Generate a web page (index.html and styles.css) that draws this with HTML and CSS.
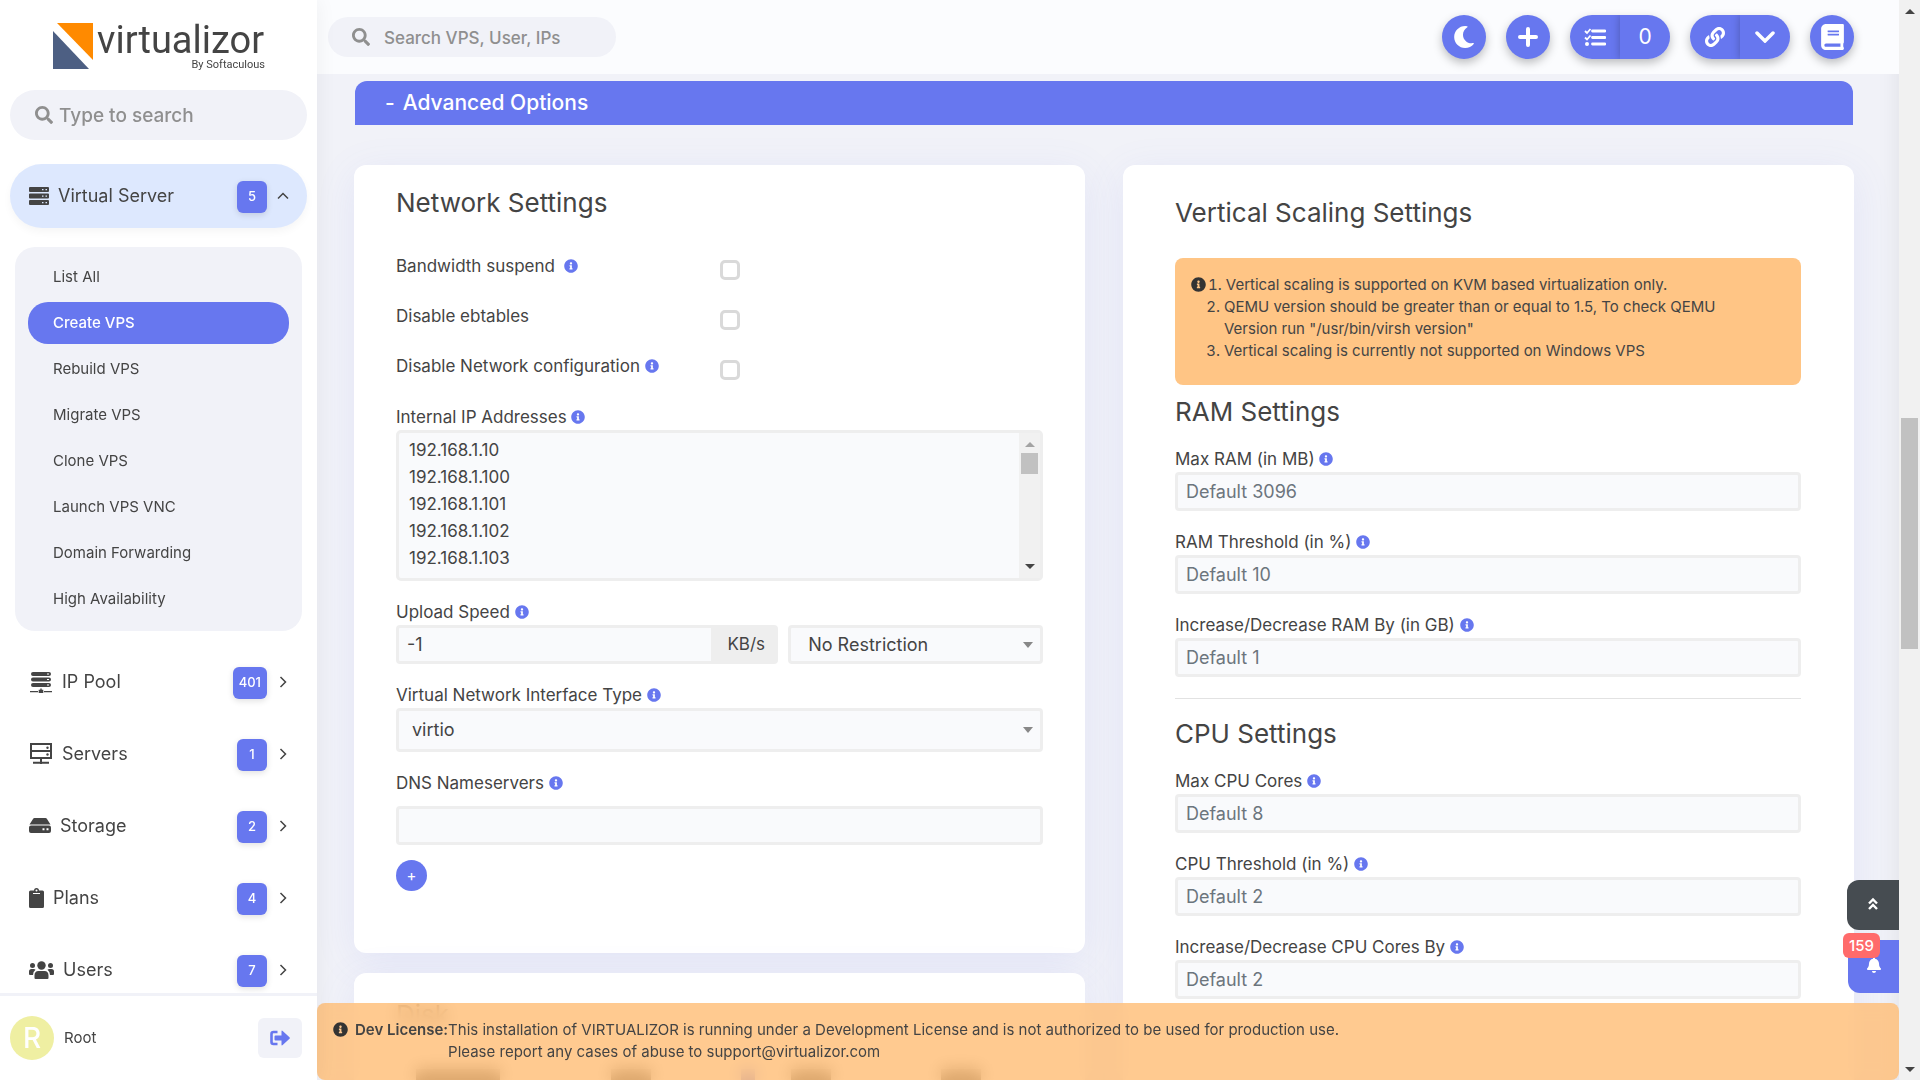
FILE: index.html
```
<!DOCTYPE html>
<html lang="en">
<head>
    <meta charset="UTF-8">
    <meta name="viewport" content="width=device-width, initial-scale=1.0">
    <title>Virtualizor - Create VPS</title>
    <link rel="stylesheet" href="styles.css">
</head>
<body>
    <svg class="sprite" aria-hidden="true">
        <symbol id="i-search" viewBox="0 0 512 512"><path d="M505 442.7L405.3 343c-4.5-4.5-10.6-7-17-7H372c27.6-35.3 44-79.7 44-128C416 93.1 322.9 0 208 0S0 93.1 0 208s93.1 208 208 208c48.3 0 92.7-16.4 128-44v16.3c0 6.4 2.5 12.5 7 17l99.7 99.7c9.4 9.4 24.6 9.4 33.9 0l28.3-28.3c9.4-9.4 9.4-24.6.1-34zM208 336c-70.7 0-128-57.2-128-128 0-70.7 57.2-128 128-128 70.7 0 128 57.2 128 128 0 70.7-57.2 128-128 128z"/></symbol>
        <symbol id="i-info" viewBox="0 0 512 512"><path d="M256 8C119.043 8 8 119.083 8 256c0 136.997 111.043 248 248 248s248-111.003 248-248C504 119.083 392.957 8 256 8zm0 110c23.196 0 42 18.804 42 42s-18.804 42-42 42-42-18.804-42-42 18.804-42 42-42zm56 254c0 6.627-5.373 12-12 12h-88c-6.627 0-12-5.373-12-12v-24c0-6.627 5.373-12 12-12h12v-64h-12c-6.627 0-12-5.373-12-12v-24c0-6.627 5.373-12 12-12h64c6.627 0 12 5.373 12 12v100h12c6.627 0 12 5.373 12 12v24z"/></symbol>
        <symbol id="i-moon" viewBox="0 0 512 512"><path d="M283.211 512c78.962 0 151.079-35.925 198.857-94.792 7.068-8.708-.639-21.43-11.562-19.35-124.203 23.654-238.262-71.576-238.262-196.954 0-72.222 38.662-138.635 101.498-174.394 9.686-5.512 7.25-20.197-3.756-22.23A258.156 258.156 0 0 0 283.211 0c-141.309 0-256 114.511-256 256 0 141.309 114.511 256 256 256z"/></symbol>
        <symbol id="i-link" viewBox="0 0 512 512"><path d="M326.612 185.391c59.747 59.809 58.927 155.698.36 214.59-.11.12-.24.25-.36.37l-67.2 67.2c-59.27 59.27-155.699 59.262-214.96 0-59.27-59.26-59.27-155.7 0-214.96l37.106-37.106c9.84-9.84 26.786-3.3 27.294 10.606.648 17.722 3.826 35.527 9.69 52.721 1.986 5.822.567 12.262-3.783 16.612l-13.087 13.087c-28.026 28.026-28.905 73.66-1.155 101.96 28.024 28.579 74.086 28.749 102.325.51l67.2-67.19c28.191-28.191 28.073-73.757 0-101.83-3.701-3.694-7.429-6.564-10.341-8.569a16.037 16.037 0 0 1-6.947-12.606c-.396-10.567 3.348-21.456 11.698-29.806l21.054-21.055c5.521-5.521 14.182-6.199 20.584-1.731a152.482 152.482 0 0 1 20.522 17.197zM467.547 44.449c-59.261-59.262-155.69-59.27-214.96 0l-67.2 67.2c-.12.12-.25.25-.36.37-58.566 58.892-59.387 154.781.36 214.59a152.454 152.454 0 0 0 20.521 17.196c6.402 4.468 15.064 3.789 20.584-1.731l21.054-21.055c8.35-8.35 12.094-19.239 11.698-29.806a16.037 16.037 0 0 0-6.947-12.606c-2.912-2.005-6.64-4.875-10.341-8.569-28.073-28.073-28.191-73.639 0-101.83l67.2-67.19c28.239-28.239 74.3-28.069 102.325.51 27.75 28.3 26.872 73.934-1.155 101.96l-13.087 13.087c-4.35 4.35-5.769 10.79-3.783 16.612 5.864 17.194 9.042 34.999 9.69 52.721.509 13.906 17.454 20.446 27.294 10.606l37.106-37.106c59.271-59.259 59.271-155.699.001-214.959z"/></symbol>
        <symbol id="i-book" viewBox="0 0 448 512"><path d="M448 360V24c0-13.3-10.7-24-24-24H96C43 0 0 43 0 96v320c0 53 43 96 96 96h328c13.3 0 24-10.7 24-24v-16c0-7.5-3.5-14.3-8.9-18.7-4.2-15.4-4.2-59.3 0-74.7 5.4-4.3 8.9-11.1 8.9-18.6zM128 134c0-3.3 2.7-6 6-6h212c3.3 0 6 2.7 6 6v20c0 3.3-2.7 6-6 6H134c-3.3 0-6-2.7-6-6v-20zm0 64c0-3.3 2.7-6 6-6h212c3.3 0 6 2.7 6 6v20c0 3.3-2.7 6-6 6H134c-3.3 0-6-2.7-6-6v-20zm253.4 250H96c-17.7 0-32-14.3-32-32 0-17.6 14.4-32 32-32h285.4c-1.9 17.1-1.9 46.9 0 64z"/></symbol>
        <symbol id="i-bell" viewBox="0 0 448 512"><path d="M224 512c35.32 0 63.97-28.65 63.97-64H160.03c0 35.35 28.65 64 63.97 64zm215.39-149.71c-19.32-20.76-55.47-51.99-55.47-154.29 0-77.7-54.48-139.9-127.94-155.16V32c0-17.67-14.32-32-31.98-32s-31.98 14.33-31.98 32v20.84C118.56 68.1 64.08 130.3 64.08 208c0 102.3-36.15 133.53-55.47 154.29-6 6.45-8.66 14.16-8.61 21.71.11 16.4 12.98 32 32.1 32h383.8c19.12 0 32-15.6 32.1-32 .05-7.55-2.61-15.27-8.61-21.71z"/></symbol>
        <symbol id="i-chevron" viewBox="0 0 16 16"><path d="M5.500 3l5 5-5 5" fill="none" stroke="currentColor" stroke-width="1.500"/></symbol>
    </svg>

    <div class="page">
        <aside class="sidebar">
            <a class="logo" href="#">
                <svg width="220" height="62" viewBox="0 -8 220 62">
                    <path d="M6 1h36v37z" fill="#ff8a00"/>
                    <path d="M2 9v38h36z" fill="#4d5f83"/>
                    <text class="logo-name" x="46" y="31">virtualizor</text>
                    <text class="logo-by" x="214" y="46" text-anchor="end">By Softaculous</text>
                </svg>
            </a>
            <label class="search side-search">
                <svg class="icon"><use href="#i-search"/></svg>
                <input type="text" placeholder="Type to search" aria-label="Type to search">
            </label>

            <nav class="menu">
                <a class="menu-item open" href="#">
                    <svg class="menu-icon" width="20" height="18" viewBox="0 0 20 18"><path fill-rule="evenodd" d="M1 0h18q1 0 1 1v3q0 1-1 1H1Q0 5 0 4V1Q0 0 1 0zM1 6.500h18q1 0 1 1v3q0 1-1 1H1q-1 0-1-1v-3q0-1 1-1zM1 13h18q1 0 1 1v3q0 1-1 1H1q-1 0-1-1v-3q0-1 1-1zM13 2v1.300h1.500V2zM16.500 2v1.300H18V2zM13 8.500v1.300h1.500V8.500zM16.500 8.500v1.300H18V8.500zM13 15v1.300h1.500V15zM16.500 15v1.300H18V15z"/></svg>
                    <span>Virtual Server</span>
                    <b class="badge">5</b>
                    <svg class="chevron up"><use href="#i-chevron"/></svg>
                </a>
                <div class="submenu">
                    <a href="#">List All</a>
                    <a href="#" class="active">Create VPS</a>
                    <a href="#">Rebuild VPS</a>
                    <a href="#">Migrate VPS</a>
                    <a href="#">Clone VPS</a>
                    <a href="#">Launch VPS VNC</a>
                    <a href="#">Domain Forwarding</a>
                    <a href="#">High Availability</a>
                </div>
                <a class="menu-item" href="#">
                    <svg class="menu-icon" width="24" height="22" viewBox="0 0 24 22"><path fill-rule="evenodd" d="M4 1h16q2 0 2 2t-2 2H4Q2 5 2 3t2-2zM4 6.500h16q2 0 2 2t-2 2H4q-2 0-2-2t2-2zM4 12h16q2 0 2 2t-2 2H4q-2 0-2-2t2-2zM18 2.500v1h2v-1zM18 8v1h2V8zM18 13.500v1h2v-1zM1 20h8v1.200H1zM15 20h8v1.200h-8zM11.300 17.500h1.400v1.200h1.600V22H9.700v-3.300h1.600z"/></svg>
                    <span>IP Pool</span>
                    <b class="badge">401</b>
                    <svg class="chevron"><use href="#i-chevron"/></svg>
                </a>
                <a class="menu-item" href="#">
                    <svg class="menu-icon" width="24" height="22" viewBox="0 0 24 22"><path d="M2 1h20v14H2zM2 8h20M12 15v6M4 19.800h16" fill="none" stroke="currentColor" stroke-width="2"/><circle cx="18.500" cy="4.700" r="1.200"/><circle cx="18.500" cy="11.500" r="1.200"/></svg>
                    <span>Servers</span>
                    <b class="badge">1</b>
                    <svg class="chevron"><use href="#i-chevron"/></svg>
                </a>
                <a class="menu-item" href="#">
                    <svg class="menu-icon" width="22" height="16" viewBox="0 0 22 16"><path fill-rule="evenodd" d="M5.500 0h11q1 0 1.500 1l3.500 5.500H.5L4 1q.5-1 1.500-1zM2 7.500h18q2 0 2 2V13q0 2-2 2H2q-2 0-2-2V9.500q0-2 2-2zM13.500 10.300v2h2v-2zM17.500 10.300v2h2v-2z"/></svg>
                    <span>Storage</span>
                    <b class="badge">2</b>
                    <svg class="chevron"><use href="#i-chevron"/></svg>
                </a>
                <a class="menu-item" href="#">
                    <svg class="menu-icon" width="15" height="20" viewBox="0 0 15 20"><path fill-rule="evenodd" d="M1.500 2.500H5a2.500 2.500 0 0 1 5 0h3.500q1.500 0 1.500 1.500v14.500q0 1.500-1.500 1.500h-12Q0 20 0 18.500V4q0-1.500 1.500-1.500zM7.500 1.500a1 1 0 1 0 0 2 1 1 0 1 0 0-2zM4 5v1h7V5z"/></svg>
                    <span>Plans</span>
                    <b class="badge">4</b>
                    <svg class="chevron"><use href="#i-chevron"/></svg>
                </a>
                <a class="menu-item" href="#">
                    <svg class="menu-icon" width="25" height="18" viewBox="0 0 25 18"><circle cx="3.500" cy="4.500" r="2.500"/><circle cx="21.500" cy="4.500" r="2.500"/><circle cx="12.500" cy="4.500" r="4.200"/><path d="M5.500 17v-2.500q0-4.500 4-4.500h6q4 0 4 4.500V17q0 1-1 1h-12q-1 0-1-1zM0 13v-2.500Q0 8 2.500 8h2.300q1 0 1.700.7Q4 10.500 4 14H1q-1 0-1-1zM25 13v-2.500Q25 8 22.500 8h-2.300q-1 0-1.700.7 2.500 1.800 2.500 5.300h3q1 0 1-1z"/></svg>
                    <span>Users</span>
                    <b class="badge">7</b>
                    <svg class="chevron"><use href="#i-chevron"/></svg>
                </a>
            </nav>

            <div class="user">
                <span class="avatar">R</span>
                <span class="user-name">Root</span>
                <button class="logout" aria-label="Logout">
                    <svg width="20" height="16" viewBox="0 0 20 16"><path d="M7.500 2H3.500Q1.500 2 1.500 4v8q0 2 2 2h4" fill="none" stroke="currentColor" stroke-width="2.600"/><path d="M5.500 5.500h6V1.500q0-1.500 1.200-.5l6.800 6.200q.7.800 0 1.600L12.700 15q-1.200 1-1.200-.5v-4h-6q-1 0-1-1v-3q0-1 1-1z"/></svg>
                </button>
            </div>
        </aside>

        <main class="main">
            <header class="topbar">
                <label class="search top-search">
                    <svg class="icon"><use href="#i-search"/></svg>
                    <input type="text" placeholder="Search VPS, User, IPs" aria-label="Search VPS, User, IPs">
                </label>
                <div class="actions">
                    <button class="round" aria-label="Dark mode"><svg width="22" height="22"><use href="#i-moon"/></svg></button>
                    <button class="round" aria-label="Add"><svg width="20" height="20" viewBox="0 0 20 20"><path d="M10 2v16M2 10h16" stroke="currentColor" stroke-width="4" stroke-linecap="round"/></svg></button>
                    <div class="pill">
                        <button aria-label="Tasks"><svg width="22" height="18" viewBox="0 0 22 18"><path d="M1 3l2 2 3.500-4M1 9.500l2 2L6.500 7.500" fill="none" stroke="currentColor" stroke-width="1.800"/><circle cx="3" cy="16" r="2"/><path d="M8.500 3H21M8.500 9.500H21M8.500 16H21" stroke="currentColor" stroke-width="2.800" stroke-linecap="round"/></svg></button>
                        <button>0</button>
                    </div>
                    <div class="pill">
                        <button aria-label="Links"><svg width="20" height="20"><use href="#i-link"/></svg></button>
                        <button aria-label="More links"><svg width="20" height="12" viewBox="0 0 20 12"><path d="M2 2l8 8 8-8" fill="none" stroke="currentColor" stroke-width="3.500" stroke-linecap="round"/></svg></button>
                    </div>
                    <button class="round" aria-label="Documentation"><svg width="23" height="26"><use href="#i-book"/></svg></button>
                </div>
            </header>

            <div class="content">
                <h2 class="advanced"><span>-</span>Advanced Options</h2>
                <div class="columns">
                    <div class="column">
                        <section class="card network">
                            <h3>Network Settings</h3>
                            <div class="check-row">
                                <label for="bandwidth">Bandwidth suspend <svg class="info spaced"><use href="#i-info"/></svg></label>
                                <input type="checkbox" id="bandwidth">
                            </div>
                            <div class="check-row">
                                <label for="ebtables">Disable ebtables</label>
                                <input type="checkbox" id="ebtables">
                            </div>
                            <div class="check-row">
                                <label for="netconf">Disable Network configuration <svg class="info"><use href="#i-info"/></svg></label>
                                <input type="checkbox" id="netconf">
                            </div>
                            <div class="field ips">
                                <label for="ips">Internal IP Addresses <svg class="info"><use href="#i-info"/></svg></label>
                                <div class="listbox">
                                    <select id="ips" multiple size="5">
                                        <option>192.168.1.10</option>
                                        <option>192.168.1.100</option>
                                        <option>192.168.1.101</option>
                                        <option>192.168.1.102</option>
                                        <option>192.168.1.103</option>
                                    </select>
                                    <div class="list-scroll"><i class="arrow-up dim"></i><i class="list-thumb"></i><i class="arrow-down"></i></div>
                                </div>
                            </div>
                            <div class="field">
                                <label for="upload">Upload Speed <svg class="info"><use href="#i-info"/></svg></label>
                                <div class="upload-row">
                                    <div class="group">
                                        <input class="control" type="text" id="upload" value="-1">
                                        <span class="unit">KB/s</span>
                                    </div>
                                    <div class="select">
                                        <select class="control" aria-label="Speed preset"><option>No Restriction</option></select>
                                    </div>
                                </div>
                            </div>
                            <div class="field">
                                <label for="nic">Virtual Network Interface Type <svg class="info"><use href="#i-info"/></svg></label>
                                <div class="select tall">
                                    <select class="control" id="nic"><option>virtio</option></select>
                                </div>
                            </div>
                            <div class="field dns">
                                <label for="dns">DNS Nameservers <svg class="info"><use href="#i-info"/></svg></label>
                                <input class="control" type="text" id="dns">
                            </div>
                            <button class="add" aria-label="Add nameserver">+</button>
                        </section>
                        <section class="card disk">
                            <h3>Disk</h3>
                            <div class="disk-head"><i></i><i></i><i class="dot"></i><i></i><i></i></div>
                        </section>
                    </div>

                    <section class="card scaling">
                        <h3>Vertical Scaling Settings</h3>
                        <div class="alert">
                            <svg class="info"><use href="#i-info"/></svg>
                            <ol>
                                <li>Vertical scaling is supported on KVM based virtualization only.</li>
                                <li>QEMU version should be greater than or equal to 1.5, To check QEMU<br>Version run "/usr/bin/virsh version"</li>
                                <li>Vertical scaling is currently not supported on Windows VPS</li>
                            </ol>
                        </div>
                        <h3>RAM Settings</h3>
                        <div class="field">
                            <label for="max-ram">Max RAM (in MB) <svg class="info"><use href="#i-info"/></svg></label>
                            <input class="control" type="text" id="max-ram" placeholder="Default 3096">
                        </div>
                        <div class="field">
                            <label for="ram-th">RAM Threshold (in %) <svg class="info"><use href="#i-info"/></svg></label>
                            <input class="control" type="text" id="ram-th" placeholder="Default 10">
                        </div>
                        <div class="field">
                            <label for="ram-by">Increase/Decrease RAM By (in GB) <svg class="info"><use href="#i-info"/></svg></label>
                            <input class="control" type="text" id="ram-by" placeholder="Default 1">
                        </div>
                        <hr>
                        <h3>CPU Settings</h3>
                        <div class="field">
                            <label for="max-cpu">Max CPU Cores <svg class="info"><use href="#i-info"/></svg></label>
                            <input class="control" type="text" id="max-cpu" placeholder="Default 8">
                        </div>
                        <div class="field">
                            <label for="cpu-th">CPU Threshold (in %) <svg class="info"><use href="#i-info"/></svg></label>
                            <input class="control" type="text" id="cpu-th" placeholder="Default 2">
                        </div>
                        <div class="field">
                            <label for="cpu-by">Increase/Decrease CPU Cores By <svg class="info"><use href="#i-info"/></svg></label>
                            <input class="control" type="text" id="cpu-by" placeholder="Default 2">
                        </div>
                    </section>
                </div>
            </div>

            <div class="floating">
                <button class="to-top" aria-label="Back to top"><svg width="12" height="14" viewBox="0 0 12 14"><path d="M2 6.500l4-4 4 4M2 12l4-4 4 4" fill="none" stroke="currentColor" stroke-width="2.400"/></svg></button>
                <button class="bell" aria-label="Notifications">
                    <svg width="14" height="16"><use href="#i-bell"/></svg>
                    <span class="count">159</span>
                </button>
            </div>
            <div class="license">
                <svg class="info"><use href="#i-info"/></svg>
                <strong>Dev License:</strong>
                <p>This installation of VIRTUALIZOR is running under a Development License and is not authorized to be used for production use.<br>Please report any cases of abuse to support@virtualizor.com</p>
            </div>
        </main>

        <div class="scrollbar"><i class="arrow-up"></i><i class="thumb"></i><i class="arrow-down"></i></div>
    </div>
</body>
</html>
```

FILE: styles.css
```
* {
    box-sizing: border-box;
}

body {
    margin: 0;
    font-family: Inter, "Open Sans", sans-serif;
    font-size: 17px;
    line-height: 24px;
    color: #444;
    background-color: #f1f2f8;
}

a {
    color: inherit;
    text-decoration: none;
}

button,
input,
select {
    font: inherit;
    color: inherit;
}

button {
    border: 0;
    padding: 0;
    cursor: pointer;
    color: #fff;
    background-color: #6777ef;
}

svg {
    fill: currentColor;
    flex: none;
}

.sprite {
    position: absolute;
    width: 0;
    height: 0;
}

.page {
    display: flex;
    height: 100vh;
    overflow: hidden;
}

/* sidebar */
.sidebar {
    display: flex;
    flex-direction: column;
    width: 317px;
    flex: none;
    background-color: #fff;
    z-index: 3;
    box-shadow: 0 0 20px rgba(0, 0, 0, 0.06);
}

.logo {
    height: 90px;
    flex: none;
    padding: 14px 0 0 51px;
}

.logo-name {
    font-family: Roboto, sans-serif;
    font-size: 38px;
}

.logo-by {
    font-family: Roboto, sans-serif;
    font-size: 11px;
}

.search {
    display: flex;
    align-items: center;
    background-color: #f1f2f8;
    color: #8f8f8f;
}

.search .icon {
    width: 18px;
    height: 18px;
}

.search input {
    flex: 1;
    min-width: 0;
    border: 0;
    padding: 2px 0 0;
    outline: none;
    background: none;
    font-weight: 500;
}

.search input::placeholder {
    color: #8f8f8f;
}

.side-search {
    height: 50px;
    flex: none;
    margin: 0 10px 24px;
    padding: 0 25px;
    gap: 6px;
    border-radius: 25px;
    font-size: 19px;
}

.menu {
    flex: 1;
    min-height: 0;
    overflow: hidden;
}

.menu-item {
    display: flex;
    align-items: center;
    height: 64px;
    margin: 0 10px 8px;
    padding: 0 16px 0 19px;
    border-radius: 32px;
    font-size: 18px;
}

.menu-item.open {
    background-color: #dde8fe;
    margin-bottom: 19px;
    box-shadow: 0 4px 8px rgba(0, 0, 0, 0.04);
}

.menu-icon {
    margin-right: 9px;
}

.badge {
    min-width: 30px;
    height: 32px;
    margin: 2px 0 0 auto;
    padding: 0 6px;
    border-radius: 6px;
    background-color: #6777ef;
    color: #fff;
    font-size: 13px;
    font-weight: 500;
    line-height: 31px;
    text-align: center;
    box-shadow: 0 2px 6px rgba(0, 0, 0, 0.12);
}

.chevron {
    width: 16px;
    height: 16px;
    margin-left: 8px;
}

.chevron.up {
    transform: rotate(-90deg);
}

.submenu {
    display: flex;
    flex-direction: column;
    gap: 4px;
    margin: 0 15px 19px;
    padding: 9px 13px 11px;
    border-radius: 20px;
    background-color: #f1f2f8;
    font-size: 15px;
}

.submenu a {
    padding: 0 25px;
    line-height: 42px;
    border-radius: 20px;
}

.submenu .active {
    background-color: #6777ef;
    color: #fff;
    font-weight: 500;
}

.user {
    display: flex;
    align-items: center;
    height: 87px;
    flex: none;
    padding: 0 15px 0 10px;
    border-top: 3px solid #f1f2f8;
}

.avatar {
    width: 44px;
    height: 44px;
    border-radius: 50%;
    background-color: #efefa2;
    color: #fff;
    font-size: 28px;
    line-height: 44px;
    text-align: center;
    font-weight: 500;
}

.user-name {
    margin-left: 10px;
    font-size: 15px;
}

.logout {
    display: flex;
    align-items: center;
    justify-content: center;
    width: 44px;
    height: 40px;
    margin-left: auto;
    border-radius: 6px;
    background-color: #f1f2f8;
    color: #6777ef;
}

/* main area */
.main {
    position: relative;
    flex: 1;
    min-width: 0;
    overflow: hidden;
    box-shadow: inset -14px 0 20px -10px rgba(0, 0, 0, 0.06);
}

.topbar {
    display: flex;
    align-items: center;
    justify-content: space-between;
    height: 74px;
    padding: 0 45px 0 11px;
    background-color: #fbfcfe;
}

.top-search {
    width: 288px;
    height: 40px;
    padding: 0 24px;
    gap: 14px;
    border-radius: 20px;
}

.actions {
    display: flex;
    gap: 20px;
}

.round,
.pill {
    height: 44px;
    border-radius: 22px;
    box-shadow: 0 4px 10px rgba(0, 0, 0, 0.25);
}

.round,
.pill button {
    display: flex;
    align-items: center;
    justify-content: center;
}

.round {
    width: 44px;
}

.pill {
    display: flex;
    overflow: hidden;
}

.pill button {
    width: 50px;
    font-size: 21px;
}

.pill button:last-child {
    box-shadow: 0 0 8px rgba(0, 0, 0, 0.25);
}

.content {
    padding: 7px 45px 0 37px;
}

.advanced {
    display: flex;
    gap: 8px;
    height: 44px;
    margin: 0 1px 40px;
    padding: 0 30px;
    border-radius: 12px 12px 0 0;
    background-color: #6777ef;
    color: #fff;
    font-size: 21px;
    font-weight: 500;
    line-height: 44px;
}

.columns {
    display: grid;
    grid-template-columns: 1fr 1fr;
    gap: 38px;
}

.column {
    display: flex;
    flex-direction: column;
    gap: 20px;
}

.card {
    border-radius: 12px;
    background-color: #fff;
    box-shadow: 0 8px 40px rgba(103, 119, 239, 0.1);
}

.card h3 {
    margin: 0;
    font-size: 26px;
    font-weight: 400;
    line-height: 32px;
}

.network {
    height: 788px;
    padding: 22px 42px;
}

.network h3 {
    margin-bottom: 35px;
}

.check-row {
    display: grid;
    grid-template-columns: 1fr 1fr;
    height: 50px;
}

.check-row input {
    appearance: none;
    width: 20px;
    height: 20px;
    margin: 6px 0 0;
    border: 3px solid #d9d9d9;
    border-radius: 5px;
    background-color: #fff;
}

.info {
    width: 14px;
    height: 14px;
    color: #6777ef;
    vertical-align: -1px;
}

.info.spaced {
    margin-left: 4px;
}

.field label {
    display: block;
    line-height: 26px;
}

.field {
    margin-bottom: 18px;
}

.control {
    display: block;
    width: 100%;
    height: 39px;
    padding: 0 8px;
    border: 3px solid #eee;
    border-radius: 4px;
    background-color: #f9fafc;
    font-size: 18px;
    outline: none;
    appearance: none;
}

.control::placeholder {
    color: #6c757d;
    opacity: 1;
}

.listbox {
    position: relative;
    height: 151px;
    border: 3px solid #eee;
    border-radius: 5px;
    background-color: #f9fafc;
    padding: 7px 0 0;
}

.listbox select {
    display: block;
    width: 100%;
    height: 137px;
    padding: 0 8px;
    border: 0;
    outline: none;
    background: none;
    overflow: hidden;
}

.listbox option {
    min-height: 27px;
    padding: 0 2px;
    line-height: 27px;
}

.list-scroll {
    position: absolute;
    top: 0;
    right: 0;
    bottom: 0;
    width: 21px;
    display: flex;
    flex-direction: column;
    align-items: center;
    padding: 9px 0;
    background-color: #f1f1f1;
}

.list-thumb {
    width: 17px;
    height: 21px;
    margin-top: 6px;
    background-color: #c1c1c1;
}

.arrow-up,
.arrow-down {
    width: 0;
    height: 0;
    border: 5px solid transparent;
}

.arrow-up {
    border-top: 0;
    border-bottom-color: #444;
}

.arrow-up.dim {
    border-bottom-color: #a3a3a3;
}

.arrow-down {
    margin-top: auto;
    border-bottom: 0;
    border-top-color: #444;
}

.upload-row {
    display: flex;
    gap: 10px;
}

.group {
    display: flex;
    flex: 3;
}

.group .control {
    border-radius: 4px 0 0 4px;
}

.unit {
    width: 64px;
    flex: none;
    border-radius: 0 4px 4px 0;
    background-color: #eee;
    line-height: 39px;
    text-align: center;
}

.select {
    position: relative;
    flex: 2;
}

.select::after {
    content: "";
    position: absolute;
    top: 50%;
    right: 10px;
    margin-top: -3px;
    border: 5px solid transparent;
    border-top: 6px solid #888;
    border-bottom: 0;
    pointer-events: none;
}

.select .control {
    padding: 0 17px;
}

.select.tall .control {
    height: 44px;
    padding: 0 13px;
}

.dns label {
    margin-bottom: 10px;
}

.dns {
    margin-bottom: 15px;
}

.add {
    width: 31px;
    height: 31px;
    border-radius: 50%;
    font-size: 15px;
    line-height: 28px;
}

.disk {
    height: 200px;
    padding: 26px 42px;
}

/* column headings of the disk list, under the license bar */
.disk-head {
    display: grid;
    grid-template-columns: 195px 130px 50px 150px 1fr;
    padding: 38px 20px 0;
}

.disk-head i {
    width: 40px;
    height: 16px;
    background-color: #444;
}

.disk-head i:first-child {
    width: 84px;
}

.disk-head .dot {
    width: 14px;
    background-color: #6777ef;
}

.scaling {
    padding: 32px 53px 0 52px;
}

.alert {
    display: flex;
    gap: 5px;
    height: 127px;
    margin: 29px 0 11px;
    padding: 16px;
    border-radius: 8px;
    background-color: #ffc585;
    font-size: 15px;
    line-height: 22px;
}

.alert .info {
    width: 15px;
    height: 15px;
    margin-top: 3px;
    color: #333;
}

.alert ol {
    margin: 0;
    padding-left: 13px;
}

.alert li:first-child {
    list-style-position: inside;
    margin-left: -16px;
}

.scaling h3 + .field {
    margin-top: 18px;
}

hr {
    height: 1px;
    margin: 21px 0 19px;
    border: 0;
    background-color: #e2e2e2;
}

/* fixed things over the page */
.floating {
    position: absolute;
    right: 0;
    bottom: 87px;
    display: flex;
    flex-direction: column;
    align-items: flex-end;
    gap: 10px;
}

.to-top {
    width: 52px;
    height: 50px;
    border-radius: 12px 0 0 12px;
    background-color: #464c51;
}

.bell {
    position: relative;
    width: 51px;
    height: 53px;
    border-radius: 12px 0 0 12px;
}

.count {
    position: absolute;
    top: -7px;
    left: -5px;
    width: 37px;
    border-radius: 6px;
    background-color: #ff6b6b;
    font-size: 15px;
    font-weight: 500;
    line-height: 25px;
}

.license {
    position: absolute;
    left: 0;
    right: 0;
    bottom: 0;
    display: flex;
    height: 77px;
    padding: 16px;
    border-radius: 8px;
    background-color: rgba(255, 190, 120, 0.82);
    backdrop-filter: blur(8px);
    font-size: 15px;
    line-height: 22px;
}

.license .info {
    width: 15px;
    height: 15px;
    margin: 3px 7px 0 0;
    color: #333;
}

.license strong {
    font-weight: 600;
}

.license p {
    margin: 0;
}

.scrollbar {
    display: flex;
    flex-direction: column;
    align-items: center;
    width: 21px;
    flex: none;
    padding: 9px 0 8px;
    background-color: #f1f1f1;
}

.scrollbar .thumb {
    width: 17px;
    height: 231px;
    margin-top: 404px;
    background-color: #c1c1c1;
}
```
